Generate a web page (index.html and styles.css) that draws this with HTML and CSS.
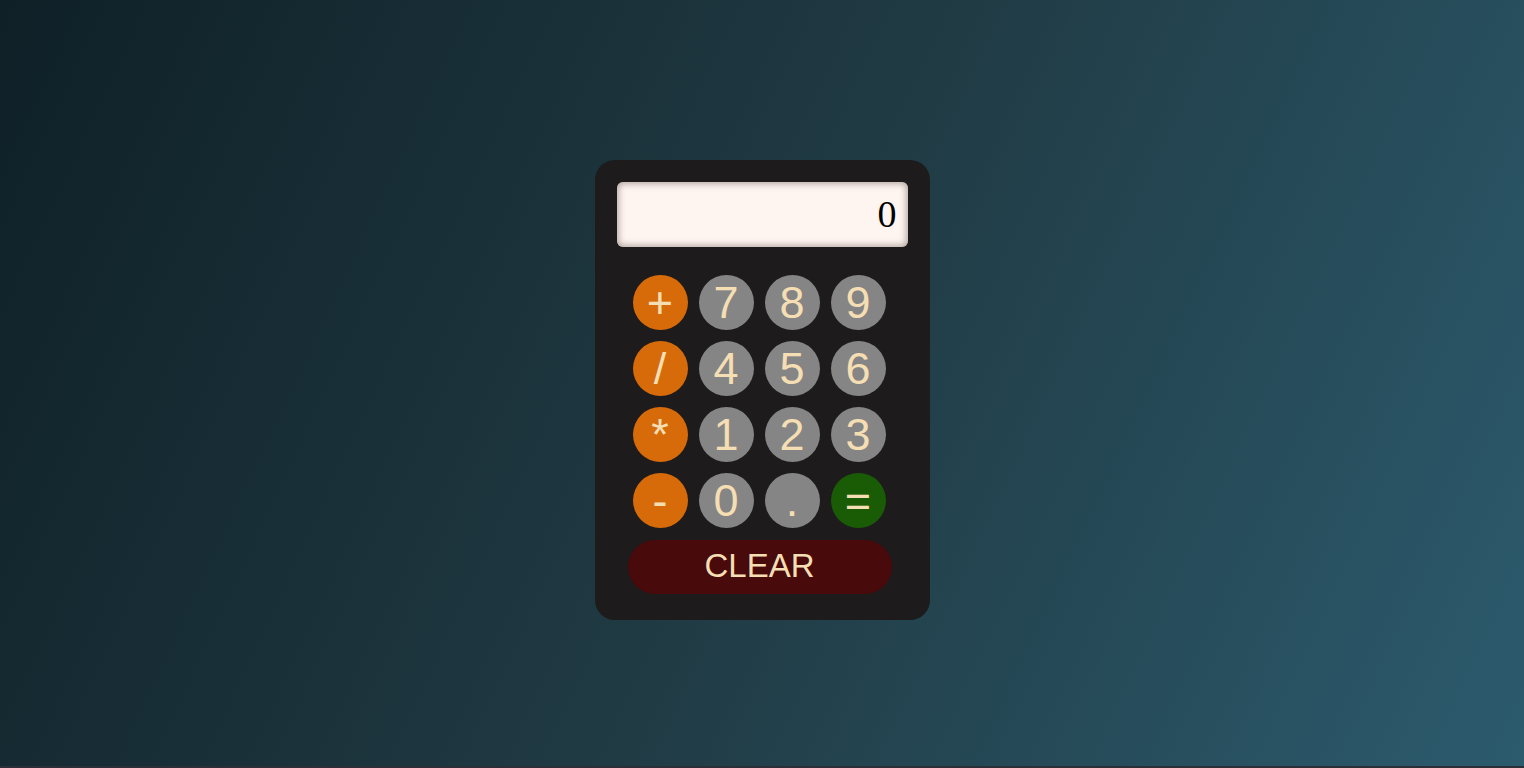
FILE: index.html
```html
<!DOCTYPE html>
<html>
<head>
<meta charset="utf-8">
<link rel="stylesheet" href="styles.css">
</head>
<body>
<div class="page">
  <div class="calc">
    <div class="display">0</div>
    <div class="keys">
      <button class="key op">+</button>
      <button class="key num">7</button>
      <button class="key num">8</button>
      <button class="key num">9</button>
      <button class="key op">/</button>
      <button class="key num">4</button>
      <button class="key num">5</button>
      <button class="key num">6</button>
      <button class="key op">*</button>
      <button class="key num">1</button>
      <button class="key num">2</button>
      <button class="key num">3</button>
      <button class="key op">-</button>
      <button class="key num">0</button>
      <button class="key num">.</button>
      <button class="key eq">=</button>
    </div>
    <button class="clear">CLEAR</button>
  </div>
</div>
</body>
</html>
```
FILE: styles.css
```css
html, body {
  margin: 0;
  padding: 0;
  height: 100%;
}
body {
  background: linear-gradient(115deg, #0f2027 0%, #203a43 50%, #2c5b6e 100%);
  font-family: "Liberation Sans", Arial, sans-serif;
  border-bottom: 2px solid #2a2f38;
  box-sizing: border-box;
}
.page {
  height: 100%;
  display: flex;
  justify-content: center;
  align-items: flex-start;
  padding-top: 160px;
  box-sizing: border-box;
}
.calc {
  width: 335px;
  height: 460px;
  box-sizing: border-box;
  background: #1d1b1c;
  border-radius: 20px;
  padding: 22px 22px 0 22px;
  display: flex;
  flex-direction: column;
}
.display {
  height: 65px;
  flex: 0 0 65px;
  box-sizing: border-box;
  background: #fff5f0;
  border-radius: 6px;
  box-shadow: inset 0 0 6px 2px rgba(120, 110, 100, 0.55);
  font-family: "Liberation Serif", "Times New Roman", serif;
  font-size: 38px;
  color: #000;
  text-align: right;
  padding: 12px 11px 0 0;
  line-height: 40px;
}
.keys {
  margin-top: 28px;
  padding-left: 16px;
  display: grid;
  grid-template-columns: repeat(4, 55px);
  grid-auto-rows: 55px;
  gap: 11px;
}
.key {
  width: 55px;
  height: 55px;
  border: none;
  border-radius: 50%;
  padding: 0;
  font-family: "Liberation Sans", Arial, sans-serif;
  font-size: 45px;
  line-height: 55px;
  color: #f5deb3;
  cursor: pointer;
}
.op { background: #d76b09; }
.num { background: #858585; }
.eq { background: #1a5c05; }
.clear {
  margin-top: 12px;
  margin-left: 11px;
  width: 264px;
  height: 54px;
  border: none;
  border-radius: 27px;
  background: #480a0a;
  color: #f5deb3;
  font-family: "Liberation Sans", Arial, sans-serif;
  font-size: 33px;
  padding: 0 0 2px 0;
}
```
